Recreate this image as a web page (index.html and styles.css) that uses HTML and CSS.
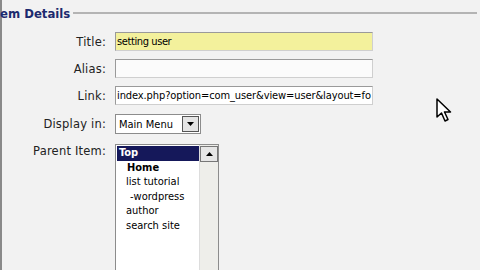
FILE: index.html
```html
<!DOCTYPE html>
<html>
<head>
<meta charset="utf-8">
<link rel="stylesheet" href="styles.css">
</head>
<body>
<div class="page">
  <div class="fieldset">
    <div class="legend-row">
      <span class="legend">em Details</span>
      <span class="rule"></span>
    </div>
    <div class="form">
      <div class="row">
        <label class="lbl">Title:</label>
        <div class="input yellow">setting user</div>
      </div>
      <div class="row">
        <label class="lbl">Alias:</label>
        <div class="input blank"></div>
      </div>
      <div class="row">
        <label class="lbl">Link:</label>
        <div class="input link">index.php?option=com_user&amp;view=user&amp;layout=fo</div>
      </div>
      <div class="row">
        <label class="lbl">Display in:</label>
        <div class="select">
          <span class="sel-text">Main Menu</span>
          <span class="sel-btn"><svg width="9" height="6" viewBox="0 0 9 6"><path d="M1 1 L8 1 L4.5 5 Z" fill="#000"/></svg></span>
        </div>
      </div>
      <div class="row top">
        <label class="lbl">Parent Item:</label>
        <div class="listbox">
          <div class="items">
            <div class="item selected">Top</div>
            <div class="item i1">Home</div>
            <div class="item">list tutorial</div>
            <div class="item i2">-wordpress</div>
            <div class="item">author</div>
            <div class="item">search site</div>
          </div>
          <div class="scroll">
            <span class="up"><svg width="9" height="6" viewBox="0 0 9 6"><path d="M1 5 L8 5 L4.5 1 Z" fill="#000"/></svg></span>
          </div>
        </div>
      </div>
    </div>
  </div>
  <svg class="cursor" width="18" height="26" viewBox="0 0 18 26"><path d="M1 1 L1 19 L5.5 15 L9 23 L12 21.5 L8.5 14 L14.5 14 Z" fill="#fff" stroke="#000" stroke-width="1.5" stroke-linejoin="round"/></svg>
</div>
</body>
</html>
```
FILE: styles.css
```css
html, body {
  margin: 0;
  padding: 0;
  background: #f2f2f2;
}
.page {
  position: relative;
  width: 480px;
  height: 270px;
  overflow: hidden;
  font-family: "DejaVu Sans Condensed", "DejaVu Sans", sans-serif;
  font-size: 11px;
  color: #111;
}
.fieldset {
  border-left: 2px solid #8a8a8a;
  height: 270px;
  box-sizing: border-box;
}
.legend-row {
  display: flex;
  align-items: center;
  height: 16px;
  padding-top: 5px;
}
.legend {
  font-family: "DejaVu Sans Condensed", "DejaVu Sans", sans-serif;
  font-weight: bold;
  font-size: 13px;
  color: #1c2a6e;
  margin-left: -2px;
}
.rule {
  flex: 1;
  height: 0;
  border-top: 2px solid #b4b4b4;
  margin-left: 3px;
  margin-right: 3px;
}
.form {
  padding-top: 11px;
  display: flex;
  flex-direction: column;
  gap: 8px;
}
.row {
  display: flex;
  align-items: center;
}
.row.top {
  align-items: flex-start;
}
.lbl {
  width: 104px;
  text-align: right;
  padding-right: 9px;
  box-sizing: content-box;
  color: #222;
  font-family: "DejaVu Sans", sans-serif;
  font-size: 11.5px;
  letter-spacing: 0.2px;
}
.row.top .lbl {
  padding-top: 2px;
}
.input {
  width: 255px;
  height: 17px;
  border: 1px solid #9a9a9a;
  border-right-color: #cfcfcf;
  border-bottom-color: #cfcfcf;
  background: #fbfbfb;
  box-sizing: content-box;
  line-height: 17px;
  padding-left: 1px;
  white-space: nowrap;
  overflow: hidden;
  color: #000;
}
.input.yellow {
  background: #f3f19c;
  letter-spacing: -0.4px;
}
.input.link {
  background: #fff;
  letter-spacing: -0.1px;
}
.select {
  display: flex;
  align-items: center;
  width: 84px;
  height: 18px;
  border: 1px solid #8c8c8c;
  background: #fff;
  margin-top: 1px;
}
.sel-text {
  flex: 1;
  padding-left: 3px;
  color: #000;
}
.sel-btn {
  width: 15px;
  height: 14px;
  margin-right: 1px;
  border: 1px solid #555;
  background: #e4e4e4;
  display: flex;
  align-items: center;
  justify-content: center;
}
.listbox {
  display: flex;
  width: 102px;
  height: 140px;
  border: 1px solid #8c8c8c;
  background: #fff;
  margin-top: 2px;
}
.items {
  flex: 1;
  padding-top: 1px;
  padding-left: 1px;
  color: #000;
}
.item {
  height: 14.5px;
  line-height: 14.5px;
  padding-left: 9px;
}
.item.selected {
  background: #15185a;
  color: #fff;
  font-weight: bold;
  padding-left: 2px;
}
.item.i1 {
  padding-left: 10px;
  font-weight: bold;
}
.item.i2 {
  padding-left: 13px;
}
.scroll {
  width: 18px;
  background: #eeeeea;
  border-left: 1px solid #ddd;
  padding-top: 1px;
}
.up {
  display: flex;
  align-items: center;
  justify-content: center;
  width: 16px;
  height: 14px;
  border: 1px solid #777;
  background: #e6e6e6;
}
.cursor {
  position: absolute;
  left: 436px;
  top: 98px;
}
```
